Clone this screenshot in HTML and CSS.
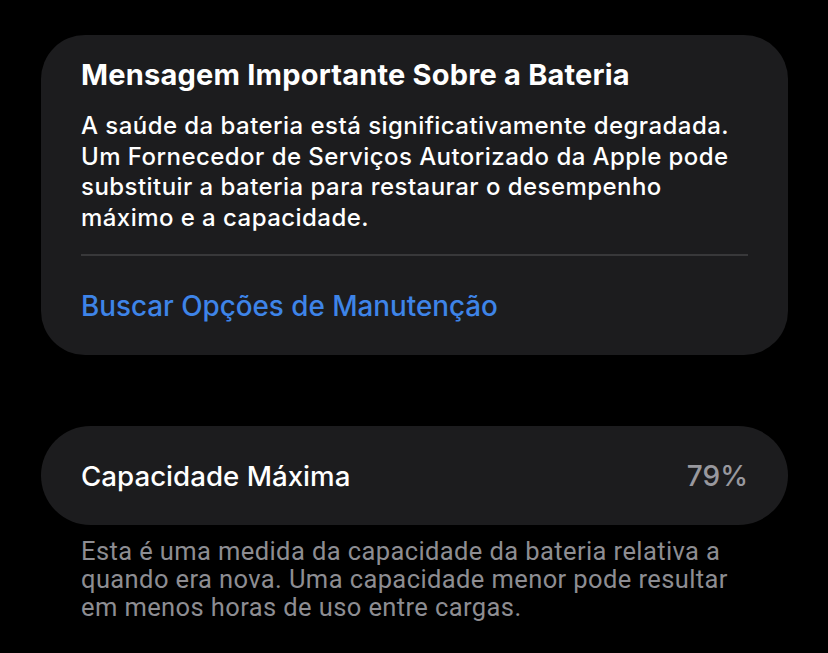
FILE: index.html
```html
<!DOCTYPE html>
<html lang="pt">
<head>
<meta charset="utf-8">
<link rel="stylesheet" href="styles.css">
</head>
<body>
<main class="page">
  <section class="card notice">
    <h1 class="notice-title">Mensagem Importante Sobre a Bateria</h1>
    <p class="notice-body">A saúde da bateria está significativamente degradada. Um Fornecedor de Serviços Autorizado da Apple pode substituir a bateria para restaurar o desempenho máximo e a capacidade.</p>
    <div class="separator"></div>
    <a class="notice-link">Buscar Opções de Manutenção</a>
  </section>
  <section class="card capacity">
    <span class="capacity-label">Capacidade Máxima</span>
    <span class="capacity-value">79%</span>
  </section>
  <p class="footnote">Esta é uma medida da capacidade da bateria relativa a quando era nova. Uma capacidade menor pode resultar em menos horas de uso entre cargas.</p>
</main>
</body>
</html>
```
FILE: styles.css
```css
html, body {
  margin: 0;
  padding: 0;
  background: #000;
}
body {
  font-family: Inter, "Noto Sans", sans-serif;
  color: #fff;
  width: 828px;
  height: 653px;
  overflow: hidden;
}
.page {
  padding: 35px 40px 0 41px;
  display: flex;
  flex-direction: column;
}
.card {
  background: #1c1c1e;
  border-radius: 44px;
}
.notice {
  height: 320px;
  box-sizing: border-box;
  padding: 22px 40px 0 40px;
  display: flex;
  flex-direction: column;
}
.notice-title {
  margin: 0;
  font-size: 29px;
  line-height: 36px;
  font-weight: 700;
  letter-spacing: 0.2px;
}
.notice-body {
  margin: 18px 0 0;
  font-size: 24px;
  line-height: 30.5px;
  font-weight: 500;
  letter-spacing: 0.45px;
}
.separator {
  height: 2px;
  background: #38383a;
  margin-top: 21px;
}
.notice-link {
  margin-top: 33px;
  font-size: 27.8px;
  line-height: 34px;
  color: #3e84e8;
  font-weight: 500;
}
.capacity {
  margin-top: 71px;
  height: 99px;
  border-radius: 50px;
  padding: 0 40px;
  display: flex;
  align-items: center;
  justify-content: space-between;
}
.capacity-label {
  font-size: 27.7px;
  font-weight: 500;
}
.capacity-value {
  font-size: 28px;
  color: #98989e;
  font-weight: 500;
}
.footnote {
  margin: 12px 40px 0;
  font-family: Roboto, sans-serif;
  font-size: 25.5px;
  line-height: 28px;
  letter-spacing: 0.4px;
  color: #8d8d92;
}
```
